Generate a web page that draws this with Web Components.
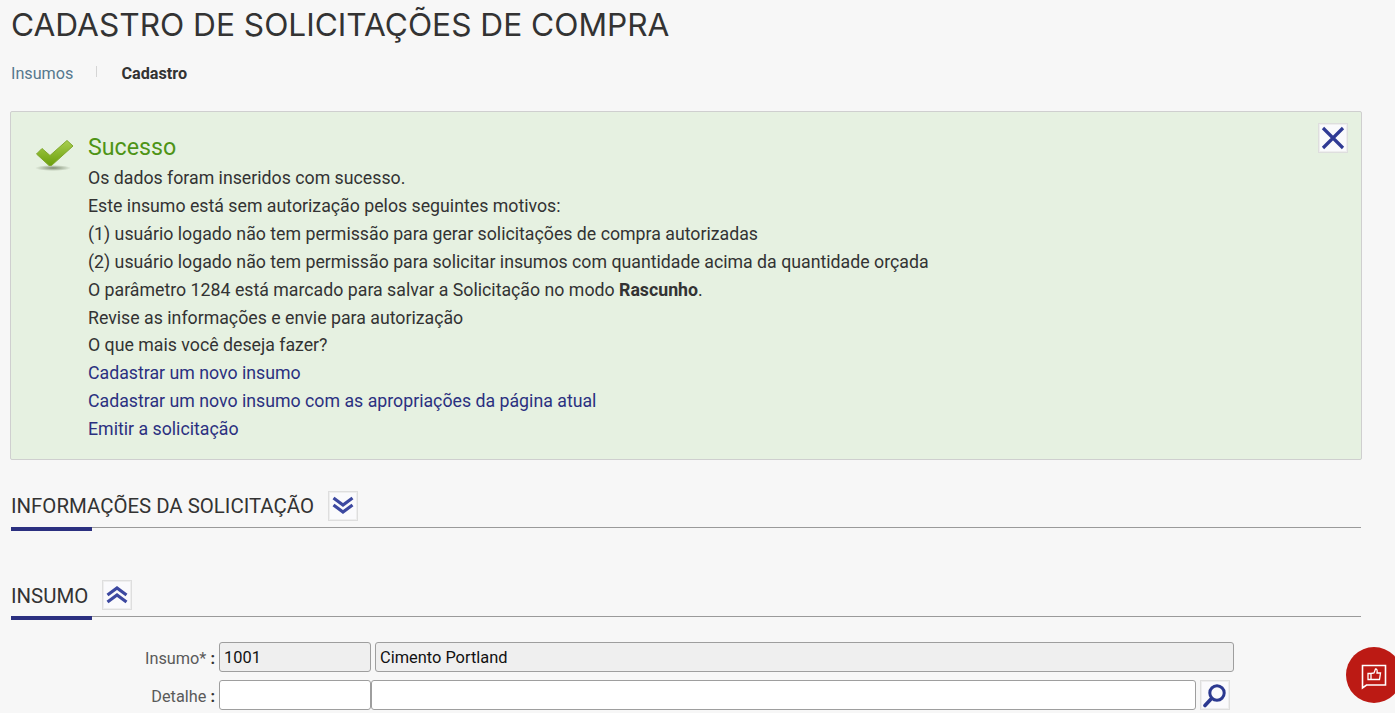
<!DOCTYPE html>
<html lang="pt-BR">
<head>
<meta charset="utf-8">
<title>Cadastro de Solicitações de Compra</title>
<style>
    html, body { margin: 0; height: 100%; overflow: hidden; }
    body {
        background: #f7f7f7;
        color: #333;
        font-family: Roboto, "Liberation Sans", sans-serif;
    }
</style>
</head>
<body>
<page-title>CADASTRO DE SOLICITAÇÕES DE COMPRA</page-title>
<bread-crumbs></bread-crumbs>
<alert-box></alert-box>
<section-head style="margin-top: 31px; --text-top: 0px" icon="down">INFORMAÇÕES DA SOLICITAÇÃO</section-head>
<section-head style="margin-top: 52px; --text-top: 1px" icon="up">INSUMO</section-head>
<insumo-form></insumo-form>
<feedback-button></feedback-button>

<script>
const ICONS = {
    close: '<path d="M4 4 L24 24 M24 4 L4 24" stroke="#2f3a94" stroke-width="3.2" fill="none"/>',
    down: '<path d="M4.5 6 L14 13 L23.5 6 M4.5 13 L14 20 L23.5 13" stroke="#3c48a0" stroke-width="3.2" fill="none"/>',
    up: '<path d="M4.5 14 L14 7 L23.5 14 M4.5 21 L14 14 L23.5 21" stroke="#3c48a0" stroke-width="3.2" fill="none"/>',
    search: '<circle cx="16" cy="12" r="7.2" stroke="#2b3990" stroke-width="3" fill="none"/><path d="M10.5 17.5 L4 24.5" stroke="#2b3990" stroke-width="3.6" stroke-linecap="round" fill="none"/>'
};

class PageTitle extends HTMLElement {
    constructor() {
        super();
        this.attachShadow({ mode: 'open' });
    }
    connectedCallback() {
        this.shadowRoot.innerHTML = `
            <style>
                :host { display: block; padding: 6px 11px 0; }
                h1 {
                    margin: 0;
                    font: 400 31.65px/37px Inter, sans-serif;
                    color: #333;
                    white-space: nowrap;
                }
            </style>
            <h1><slot></slot></h1>`;
    }
}
customElements.define('page-title', PageTitle);

class BreadCrumbs extends HTMLElement {
    constructor() {
        super();
        this.attachShadow({ mode: 'open' });
    }
    connectedCallback() {
        this.shadowRoot.innerHTML = `
            <style>
                :host {
                    display: flex;
                    align-items: center;
                    padding: 21px 11px 0;
                    height: 19px;
                    font: 400 16.2px/20px Roboto, sans-serif;
                }
                .link { color: #56788e; }
                .sep { width: 1px; height: 11px; background: #d5d5d5; margin: 0 24px 4px 23px; }
                .cur { font-weight: 700; color: #333; }
            </style>
            <span class="link">Insumos</span><span class="sep"></span><span class="cur">Cadastro</span>`;
    }
}
customElements.define('bread-crumbs', BreadCrumbs);

class AlertBox extends HTMLElement {
    constructor() {
        super();
        this.attachShadow({ mode: 'open' });
    }
    connectedCallback() {
        this.shadowRoot.innerHTML = `
            <style>
                :host {
                    display: block;
                    position: relative;
                    box-sizing: border-box;
                    margin: 28px 33px 0 10px;
                    height: 349px;
                    padding: 20px 0 0 77px;
                    background: #e6f1e1;
                    border: 1px solid #cfcfcf;
                    border-radius: 2px;
                    font: 400 17.74px/27.85px Roboto, sans-serif;
                    color: #333;
                }
                .check { position: absolute; left: 24px; top: 26px; filter: blur(0.3px); }
                h2 { margin: 0 0 2.3px; font: 400 23.2px/31px Roboto, sans-serif; color: #4e9416; }
                div { white-space: nowrap; }
                a { color: #2b3080; text-decoration: none; }
                b { font-weight: 700; }
                .close {
                    position: absolute;
                    right: 13px;
                    top: 11px;
                    box-sizing: border-box;
                    width: 30px;
                    height: 30px;
                    background: #fafafc;
                    border: 1px solid #dedede;
                    box-shadow: inset 0 0 0 1px #eee;
                    display: flex;
                }
                .close svg { margin: auto; filter: blur(0.4px); }
            </style>
            <svg class="check" width="40" height="34" viewBox="0 0 40 34">
                <defs>
                    <linearGradient id="g" x1="0" y1="0" x2="0" y2="1">
                        <stop offset="0" stop-color="#a9cf4f"/>
                        <stop offset="1" stop-color="#6b9f0c"/>
                    </linearGradient>
                    <radialGradient id="s"><stop offset="0" stop-color="#7d8a70"/><stop offset="1" stop-color="#7d8a70" stop-opacity="0"/></radialGradient>
                </defs>
                <ellipse cx="18" cy="30" rx="18" ry="3" fill="url(#s)"/>
                <path d="M1.5 16 L7 10.5 L15 17.5 L32 2.5 L38 8 L16.5 27.5 L14 27.5 Z" fill="url(#g)" stroke="#7fa62c" stroke-width="1"/>
            </svg>
            <h2>Sucesso</h2>
            <div>Os dados foram inseridos com sucesso.</div>
            <div>Este insumo está sem autorização pelos seguintes motivos:</div>
            <div>(1) usuário logado não tem permissão para gerar solicitações de compra autorizadas</div>
            <div>(2) usuário logado não tem permissão para solicitar insumos com quantidade acima da quantidade orçada</div>
            <div>O parâmetro 1284 está marcado para salvar a Solicitação no modo <b>Rascunho</b>.</div>
            <div>Revise as informações e envie para autorização</div>
            <div>O que mais você deseja fazer?</div>
            <div><a href="#">Cadastrar um novo insumo</a></div>
            <div><a href="#">Cadastrar um novo insumo com as apropriações da página atual</a></div>
            <div><a href="#">Emitir a solicitação</a></div>
            <span class="close"><svg width="28" height="28" viewBox="0 0 28 28">${ICONS.close}</svg></span>`;
    }
}
customElements.define('alert-box', AlertBox);

class IconButton extends HTMLElement {
    constructor() {
        super();
        this.attachShadow({ mode: 'open' });
    }
    connectedCallback() {
        const icon = this.getAttribute('icon');
        this.shadowRoot.innerHTML = `
            <style>
                :host {
                    display: inline-flex;
                    box-sizing: border-box;
                    width: 30px;
                    height: 30px;
                    background: #fafafc;
                    border: 1px solid #dedede;
                    box-shadow: inset 0 0 0 1px #eee;
                    flex: none;
                }
                svg { filter: blur(0.4px); }
            </style>
            <svg width="28" height="28" viewBox="0 0 28 28">${ICONS[icon]}</svg>`;
    }
}
customElements.define('icon-button', IconButton);

class SectionHead extends HTMLElement {
    constructor() {
        super();
        this.attachShadow({ mode: 'open' });
    }
    connectedCallback() {
        this.shadowRoot.innerHTML = `
            <style>
                :host {
                    display: flex;
                    align-items: center;
                    gap: 14px;
                    position: relative;
                    height: 37px;
                    margin-right: 34px;
                    margin-left: 11px;
                    box-sizing: border-box;
                    border-bottom: 1px solid #9a9a9a;
                    padding-bottom: 7px;
                    font: 400 20.4px/30px Roboto, sans-serif;
                    color: #333;
                }
                .bar {
                    position: absolute;
                    left: 0;
                    bottom: -4px;
                    width: 81px;
                    height: 4px;
                    background: #2b3080;
                }
                .text { position: relative; top: var(--text-top, 0px); }
            </style>
            <span class="text"><slot></slot></span>
            <icon-button icon="${this.getAttribute('icon')}"></icon-button>
            <span class="bar"></span>`;
    }
}
customElements.define('section-head', SectionHead);

class FormField extends HTMLElement {
    constructor() {
        super();
        this.attachShadow({ mode: 'open' });
    }
    connectedCallback() {
        const off = this.hasAttribute('disabled');
        this.shadowRoot.innerHTML = `
            <style>
                :host {
                    display: block;
                    box-sizing: border-box;
                    height: 30px;
                    padding: 1px 4px 0;
                    border: 1px solid #9e9e9e;
                    border-radius: 3px;
                    background: ${off ? '#efefef' : '#fff'};
                    font: 400 16.4px/28px Roboto, sans-serif;
                    color: #111;
                    white-space: nowrap;
                    overflow: hidden;
                }
            </style>
            <slot></slot>`;
    }
}
customElements.define('form-field', FormField);

class InsumoForm extends HTMLElement {
    constructor() {
        super();
        this.attachShadow({ mode: 'open' });
    }
    connectedCallback() {
        this.shadowRoot.innerHTML = `
            <style>
                :host {
                    display: flex;
                    flex-direction: column;
                    gap: 8px;
                    margin-top: 25px;
                    font: 400 16.3px/30px Roboto, sans-serif;
                    color: #5a5a5a;
                }
                .row { display: flex; height: 30px; }
                .label { width: 215px; margin-right: 4px; padding-top: 2px; text-align: right; white-space: nowrap; }
                .label b { color: #333; font-weight: 700; }
                .code { width: 152px; }
                .name { width: 859px; margin-left: 4px; }
                .det { width: 825px; }
                icon-button { margin-left: 4px; }
            </style>
            <div class="row">
                <span class="label">Insumo* <b>:</b></span>
                <form-field class="code" disabled>1001</form-field>
                <form-field class="name" disabled>Cimento Portland</form-field>
            </div>
            <div class="row">
                <span class="label">Detalhe <b>:</b></span>
                <form-field class="code"></form-field>
                <form-field class="det"></form-field>
                <icon-button icon="search"></icon-button>
            </div>`;
    }
}
customElements.define('insumo-form', InsumoForm);

class FeedbackButton extends HTMLElement {
    constructor() {
        super();
        this.attachShadow({ mode: 'open' });
    }
    connectedCallback() {
        this.shadowRoot.innerHTML = `
            <style>
                :host {
                    position: fixed;
                    left: 1346px;
                    top: 647px;
                    width: 56px;
                    height: 56px;
                    border-radius: 50%;
                    background: #bc1a14;
                    display: flex;
                }
                svg { margin: auto; }
            </style>
            <svg width="56" height="56" viewBox="0 0 56 56" fill="none" stroke="#fff">
                <path d="M16.5 18.5 H39.5 V38 H20.5 L16.5 41 Z" stroke-width="1.6"/>
                <path d="M22 26.5 H25 V32.5 H22 Z M25 26.5 L28 26 L29.5 22 C31 22 31.5 23 31 26 H34.5 L33.5 32.5 H25" stroke-width="1.3"/>
            </svg>`;
    }
}
customElements.define('feedback-button', FeedbackButton);
</script>
</body>
</html>
